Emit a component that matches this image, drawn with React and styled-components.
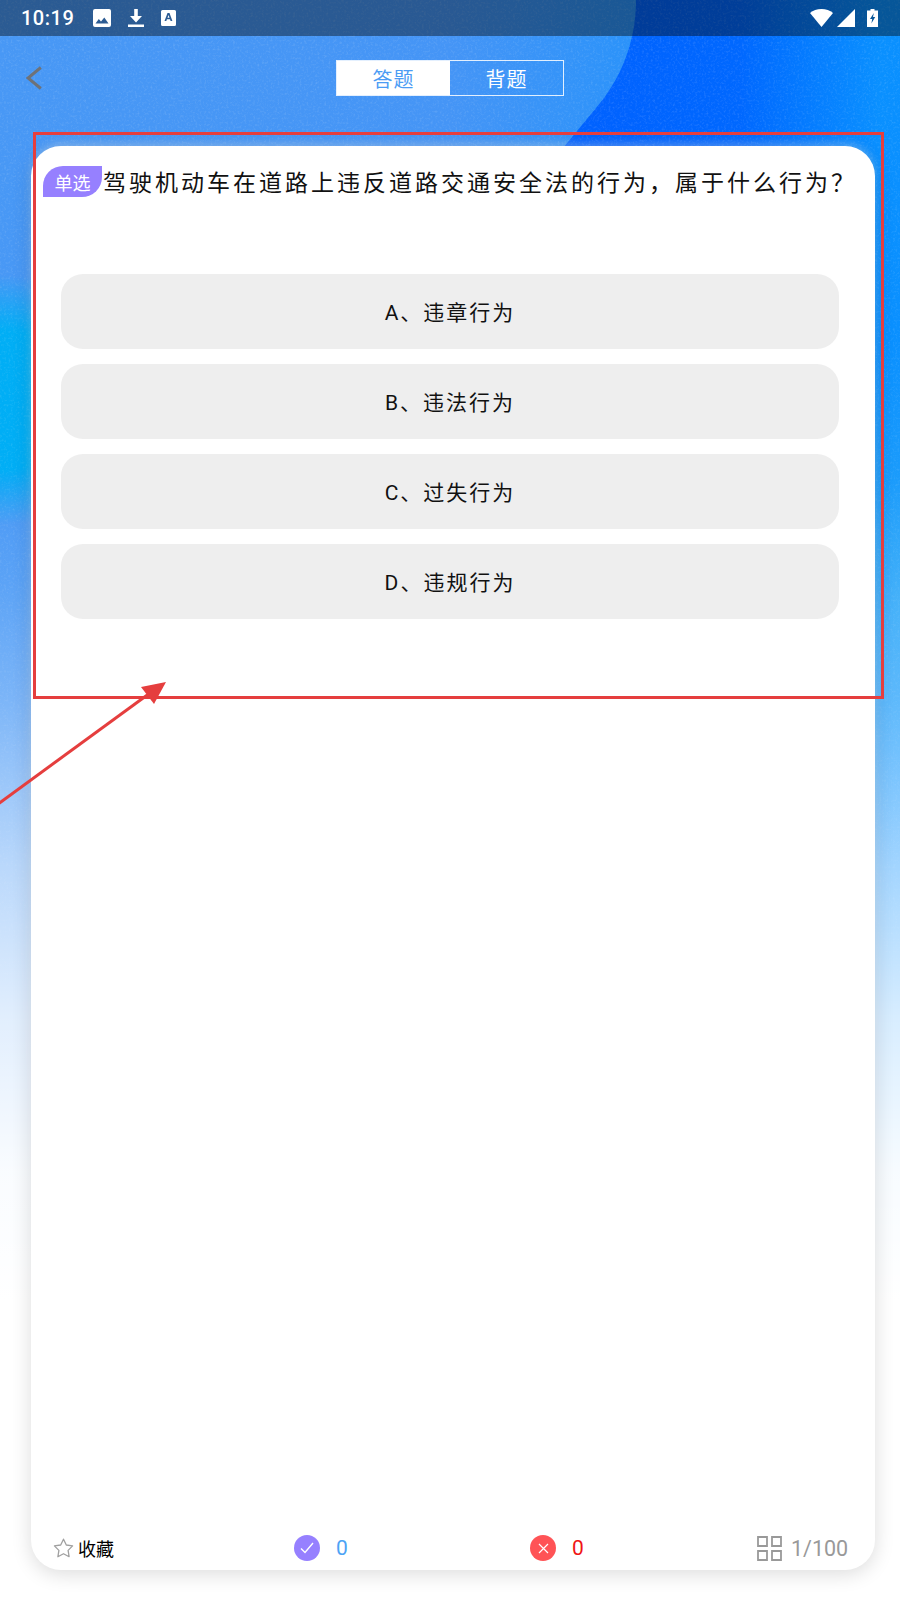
import React from "react";
import styled, { createGlobalStyle } from "styled-components";

const Global = createGlobalStyle`
  html, body { margin: 0; padding: 0; background: #fff; }
  body { font-family: Roboto, "Noto Sans CJK SC", sans-serif; }
  * { box-sizing: border-box; }
`;

const Screen = styled.div`
  position: relative;
  width: 900px;
  height: 1600px;
  overflow: hidden;
  display: flex;
  flex-direction: column;
  background:
    linear-gradient(180deg, rgba(255,255,255,0) 0, rgba(255,255,255,0) 480px, rgba(255,255,255,.1) 580px, rgba(255,255,255,.28) 697px, rgba(255,255,255,.62) 865px, rgba(255,255,255,.84) 1018px, rgba(255,255,255,.97) 1171px, #fff 1300px),
    radial-gradient(170px 125px at 0 400px, #00aef5 0, #00aef5 55%, rgba(0,174,245,0) 100%),
    radial-gradient(90px 260px at 900px 600px, #2aa6f8 0, rgba(42,166,248,0) 100%),
    linear-gradient(90deg, #4898f5 0, #4595f6 50%, #0a90ff 96%);
`;

const Backdrop = styled.svg`
  position: absolute;
  left: 0;
  top: 0;
  pointer-events: none;
`;

const StatusBar = styled.div`
  position: relative;
  height: 36px;
  flex: none;
  display: flex;
  align-items: center;
  padding: 0 22px 0 21px;
  background: rgba(0, 0, 0, 0.4);
  color: #fff;
`;

const Time = styled.span`
  font-size: 20px;
  letter-spacing: 0.5px;
  margin-right: 2px;
  font-weight: 500;
`;

const StatusLeft = styled.div`
  display: flex;
  align-items: center;
  gap: 17px;
`;

const StatusRight = styled.div`
  margin-left: auto;
  display: flex;
  align-items: center;
  gap: 4px;
`;

const NavBar = styled.div`
  position: relative;
  height: 110px;
  flex: none;
  display: grid;
  grid-template-columns: 336px 228px;
  padding-top: 24px;
  align-items: start;
`;

const BackButton = styled.div`
  padding: 6px 0 0 26px;
  line-height: 0;
`;

const Tabs = styled.div`
  display: flex;
  height: 36px;
  border: 1px solid rgba(255, 255, 255, 0.85);
`;

const Tab = styled.div`
  flex: 1;
  display: flex;
  align-items: center;
  justify-content: center;
  font-size: 20px;
  letter-spacing: 1px;
  background: ${(p) => (p.$active ? "#fff" : "transparent")};
  color: ${(p) => (p.$active ? "#4c9cf4" : "#fff")};
`;

const Card = styled.div`
  position: relative;
  margin: 0 25px 0 31px;
  height: 1424px;
  flex: none;
  background: #fff;
  border-radius: 30px;
  box-shadow: 0 4px 20px rgba(0, 0, 0, 0.14), 0 -3px 8px rgba(255, 255, 255, 0.3);
  display: flex;
  flex-direction: column;
`;

const Question = styled.div`
  display: flex;
  align-items: flex-start;
  padding: 20px 0 0 12px;
  height: 128px;
  flex: none;
`;

const TypeTag = styled.span`
  flex: none;
  width: 59px;
  height: 31px;
  display: flex;
  align-items: center;
  justify-content: center;
  background: #9680ff;
  color: #fff;
  font-size: 18px;
  border-radius: 20px 0 20px 0;
`;

const QuestionText = styled.span`
  margin-left: 1px;
  font-size: 23px;
  line-height: 36px;
  letter-spacing: 3px;
  color: #111;
  white-space: nowrap;
`;

const Options = styled.div`
  display: flex;
  flex-direction: column;
  gap: 15px;
  padding: 0 36px 0 30px;
  flex: 1;
`;

const Option = styled.div`
  height: 75px;
  border-radius: 22px;
  background: #eeeeee;
  display: flex;
  align-items: center;
  justify-content: center;
  padding-bottom: 2px;
  font-size: 21px;
  letter-spacing: 2px;
  color: #111;
`;

const Footer = styled.div`
  flex: none;
  display: grid;
  grid-template-columns: 241px 236px 227px auto;
  align-items: center;
  padding: 0 0 0 22px;
  height: 44px;
`;

const FooterItem = styled.div`
  display: flex;
  align-items: center;
`;

const Favorite = styled.span`
  margin-left: 4px;
  font-size: 18px;
  color: #000;
`;

const Badge = styled.span`
  width: 26px;
  height: 26px;
  border-radius: 50%;
  background: ${(p) => p.$color};
  display: flex;
  align-items: center;
  justify-content: center;
`;

const Count = styled.span`
  margin-left: 16px;
  font-size: 21px;
  color: ${(p) => p.$color};
`;

const Progress = styled.span`
  margin-left: 9px;
  font-size: 21.5px;
  color: #999;
`;

const Highlight = styled.div`
  position: absolute;
  left: 33px;
  top: 132px;
  width: 851px;
  height: 567px;
  border: 3px solid #e53e3e;
  pointer-events: none;
`;

const Arrow = styled.svg`
  position: absolute;
  left: 0;
  top: 670px;
  pointer-events: none;
`;

const ImageIcon = () => (
  <svg width="18" height="18" viewBox="0 0 18 18">
    <path fill="#fff" fillRule="evenodd" d="M2 0h14a2 2 0 0 1 2 2v14a2 2 0 0 1-2 2H2a2 2 0 0 1-2-2V2a2 2 0 0 1 2-2zM2.500 14.500h13L11.300 8.600 8 12.600 5.800 10z" />
  </svg>
);
const DownloadIcon = () => (
  <svg width="16" height="18" viewBox="0 0 16 18">
    <path fill="#fff" d="M6.200 0h3.600v7H14l-6 6.400L2 7h4.200zM0 15.600h16V18H0z" />
  </svg>
);
const FontIcon = () => (
  <svg width="15" height="16" viewBox="0 0 15 16">
    <path fill="#fff" fillRule="evenodd" d="M1.500 0h12A1.500 1.500 0 0 1 15 1.500v13a1.500 1.500 0 0 1-1.500 1.500h-12A1.500 1.500 0 0 1 0 14.500v-13A1.500 1.500 0 0 1 1.500 0zM6.500 3 3.500 11h1.800l.6-1.800h3.100l.6 1.800h1.800L8.500 3zM7.500 4.900l1 2.900h-2z" />
  </svg>
);
const WifiIcon = () => (
  <svg width="23" height="18" viewBox="0 0 23 18">
    <path fill="#fff" d="M11.500 18 0 4C3 1.500 7 0 11.500 0S20 1.500 23 4z" />
  </svg>
);
const SignalIcon = () => (
  <svg width="18" height="18" viewBox="0 0 18 18">
    <path fill="#fff" d="M18 0v18H0z" />
  </svg>
);
const BatteryIcon = () => (
  <svg width="11" height="18" viewBox="0 0 11 18" style={{ marginLeft: 8 }}>
    <path fill="#fff" fillRule="evenodd" d="M3.500 0h4v1.500H11V18H0V1.500h3.500zM6.800 4 3 10h2.200l-.8 4.500L8.200 8H6z" />
  </svg>
);
const ChevronIcon = () => (
  <svg width="16" height="24" viewBox="0 0 16 24">
    <path fill="none" stroke="#6e7278" strokeWidth="3" d="M14.800 1.500 2 12l12.800 10.500" />
  </svg>
);
const StarIcon = () => (
  <svg width="21" height="20" viewBox="0 0 21 20">
    <path fill="none" stroke="#a0a0a0" strokeWidth="1.300" strokeLinejoin="round" d="M10.500 1.200l2.800 5.800 6.300.9-4.500 4.500 1 6.300-5.600-3-5.600 3 1-6.300L1.400 7.900l6.300-.9z" />
  </svg>
);
const CheckIcon = () => (
  <svg width="14" height="12" viewBox="0 0 14 12">
    <path fill="none" stroke="#fff" strokeWidth="1.400" d="M1 6.500 5 10.500 13 1" />
  </svg>
);
const CrossIcon = () => (
  <svg width="11" height="11" viewBox="0 0 11 11">
    <path fill="none" stroke="#fff" strokeWidth="1.200" d="M1 1l9 9M10 1l-9 9" />
  </svg>
);
const GridIcon = () => (
  <svg width="25" height="25" viewBox="0 0 25 25">
    <path fill="none" stroke="#999" strokeWidth="1.800" d="M1 1h9v9H1zM15 1h9v9h-9zM1 15h9v9H1zM15 15h9v9h-9z" />
  </svg>
);

const options = ["A、违章行为", "B、违法行为", "C、过失行为", "D、违规行为"];

export default function App() {
  return (
    <Screen>
      <Global />
      <Backdrop width="900" height="1300" viewBox="0 0 900 1300">
        <defs>
          <linearGradient id="blob" x1="600" x2="880" y1="0" y2="0" gradientUnits="userSpaceOnUse">
            <stop offset="0" stopColor="#0062ff" />
            <stop offset="0.5" stopColor="#0068ff" />
            <stop offset="1" stopColor="#0a90ff" />
          </linearGradient>
          <linearGradient id="grainFade" x1="0" x2="0" y1="0" y2="1">
            <stop offset="0" stopColor="#fff" stopOpacity="1" />
            <stop offset="0.7" stopColor="#fff" stopOpacity="0.6" />
            <stop offset="1" stopColor="#fff" stopOpacity="0" />
          </linearGradient>
          <mask id="grainMask">
            <rect width="900" height="1300" fill="url(#grainFade)" />
          </mask>
          <filter id="grain" x="0" y="0" width="100%" height="100%">
            <feTurbulence type="fractalNoise" baseFrequency="0.45" numOctaves="2" seed="4" />
            <feColorMatrix values="0 0 0 0 1  0 0 0 0 1  0 0 0 0 1  2.200 0 0 0 -1.050" />
          </filter>
        </defs>
        <path fill="url(#blob)" d="M636 0C636 40 622 78 596 108L563 148V160H900V0Z" />
        <g mask="url(#grainMask)">
          <rect width="900" height="1300" filter="url(#grain)" opacity="0.14" />
        </g>
      </Backdrop>
      <StatusBar>
        <StatusLeft>
          <Time>10:19</Time>
          <ImageIcon />
          <DownloadIcon />
          <FontIcon />
        </StatusLeft>
        <StatusRight>
          <WifiIcon />
          <SignalIcon />
          <BatteryIcon />
        </StatusRight>
      </StatusBar>
      <NavBar>
        <BackButton>
          <ChevronIcon />
        </BackButton>
        <Tabs>
          <Tab $active>答题</Tab>
          <Tab>背题</Tab>
        </Tabs>
      </NavBar>
      <Card>
        <Question>
          <TypeTag>单选</TypeTag>
          <QuestionText>驾驶机动车在道路上违反道路交通安全法的行为，属于什么行为？</QuestionText>
        </Question>
        <Options>
          {options.map((o) => (
            <Option key={o}>{o}</Option>
          ))}
        </Options>
        <Footer>
          <FooterItem>
            <StarIcon />
            <Favorite>收藏</Favorite>
          </FooterItem>
          <FooterItem>
            <Badge $color="#9680ff">
              <CheckIcon />
            </Badge>
            <Count $color="#4da3f5">0</Count>
          </FooterItem>
          <FooterItem>
            <Badge $color="#ff5356">
              <CrossIcon />
            </Badge>
            <Count $color="#f01414">0</Count>
          </FooterItem>
          <FooterItem>
            <GridIcon />
            <Progress>1/100</Progress>
          </FooterItem>
        </Footer>
      </Card>
      <Highlight />
      <Arrow width="180" height="140" viewBox="0 670 180 140">
        <path stroke="#e53e3e" strokeWidth="3" d="M-2 804 150 693" />
        <path fill="#e53e3e" d="M166 682 141 687 154 704Z" />
      </Arrow>
    </Screen>
  );
}
